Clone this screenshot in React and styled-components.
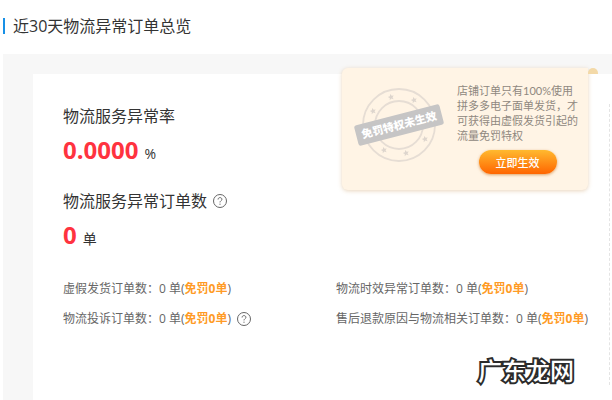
import React from "react";
import styled, { createGlobalStyle } from "styled-components";

//-----------------------------------------------------------------------------------------------

const colors = {
	blue: "#1890e6",
	red: "#ff333f",
	orange: "#ff9b26",
	text: "#333333",
	grey: "#666666",
	panel: "#f7f7f7",
	cream: "#fff4e5",
};

const GlobalStyle = createGlobalStyle`
	* {
		box-sizing: border-box;
	}

	body {
		margin: 0;
		background: #ffffff;
		color: ${colors.text};
		font-family: "Open Sans", "Noto Sans CJK SC", sans-serif;
	}
`;

const Page = styled.main`
	display: flex;
	flex-direction: column;
	min-height: 100vh;
	padding: 14px 0 0 3px;
`;

const Title = styled.h1`
	display: flex;
	align-items: center;
	gap: 8px;
	margin: 0 0 16px;
	font-size: 16px;
	font-weight: 400;
	line-height: 24px;

	&::before {
		content: "";
		width: 2px;
		height: 16px;
		background: ${colors.blue};
	}
`;

const Panel = styled.section`
	display: flex;
	flex: 1;
	padding: 20px 0 0 30px;
	background: ${colors.panel};
`;

const Card = styled.div`
	position: relative;
	display: flex;
	flex: 1;
	padding: 30px 2px 15px 30px;
	background: #ffffff;
`;

const Summary = styled.div`
	flex: 1;
	border-right: 1px dashed #e4e4e4;
`;

const Metric = styled.div`
	margin-bottom: 17px;
`;

const MetricLabel = styled.h2`
	display: flex;
	align-items: center;
	gap: 6px;
	margin: 0;
	font-size: 16px;
	font-weight: 400;
	line-height: 24px;
`;

const MetricValue = styled.p`
	display: flex;
	align-items: baseline;
	gap: 6px;
	margin: 0;
	font-size: 14px;
	line-height: 20px;

	strong {
		color: ${colors.red};
		font-size: 24px;
		font-weight: 700;
		line-height: 44px;
	}
`;

const Details = styled.ul`
	display: grid;
	grid-template-columns: 1fr 1fr;
	margin: 0;
	padding: 0;
	list-style: none;
`;

const Detail = styled.li`
	display: flex;
	align-items: center;
	gap: 6px;
	color: ${colors.grey};
	font-size: 12px;
	line-height: 30px;
	white-space: nowrap;

	b {
		color: ${colors.orange};
	}
`;

const HelpButton = styled.button`
	display: flex;
	padding: 0;
	border: 0;
	background: none;
	color: ${colors.grey};
	cursor: pointer;

	svg {
		width: 14px;
		height: 14px;
	}
`;

const Promo = styled.aside`
	position: absolute;
	top: -6px;
	right: 24px;
	display: flex;
	gap: 13px;
	width: 246px;
	padding: 15px 10px 16px 12px;
	border-radius: 6px 0 6px 6px;
	background: ${colors.cream};
	box-shadow: 0 1px 4px rgba(200, 150, 90, 0.4);

	/* folded corner behind the card edge */
	&::after {
		content: "";
		position: absolute;
		top: 0;
		left: 100%;
		width: 10px;
		height: 6px;
		border-radius: 5px 5px 0 0;
		background: #f3d9a8;
	}
`;

const PromoBody = styled.div`
	flex: 1;
	display: flex;
	flex-direction: column;
	align-items: center;
	gap: 7px;
`;

const PromoText = styled.p`
	align-self: stretch;
	margin: 0;
	color: #8f8880;
	font-family: Lato, "Noto Sans CJK SC", sans-serif;
	font-size: 11px;
	line-height: 15px;
	white-space: nowrap;

	span {
		display: block;
	}
`;

const ActivateButton = styled.button`
	width: 78px;
	height: 24px;
	padding: 0;
	border: 0;
	border-radius: 12px;
	background: linear-gradient(#ffb92f, #ff6500);
	box-shadow: 0 1px 3px rgba(200, 110, 20, 0.6);
	color: #ffffff;
	font-family: "Noto Sans CJK SC", sans-serif;
	font-size: 11px;
	font-weight: 500;
	line-height: 24px;
	cursor: pointer;
`;

const StampSvg = styled.svg`
	flex: none;
	width: 90px;
	height: 84px;

	text {
		fill: #ffffff;
		font-family: "Noto Sans CJK SC", sans-serif;
		font-size: 11px;
		font-weight: 900;
	}
`;

const Watermark = styled.span`
	position: absolute;
	right: 38px;
	bottom: 14px;
	color: #ffffff;
	font-family: "Noto Sans CJK SC", sans-serif;
	font-size: 24px;
	font-weight: 500;
	line-height: 32px;
	-webkit-text-stroke: 4px #2b2b2b;
	paint-order: stroke fill;
	stroke-linejoin: round;
`;

//-----------------------------------------------------------------------------------------------

const details = [
	{ name: "虚假发货订单数", count: 0, exempt: 0 },
	{ name: "物流时效异常订单数", count: 0, exempt: 0 },
	{ name: "物流投诉订单数", count: 0, exempt: 0, help: true },
	{ name: "售后退款原因与物流相关订单数", count: 0, exempt: 0 },
];

const stars = [
	[-8, -28],
	[15, -25],
	[-26, -14],
	[26, 14],
	[-15, 25],
	[7, 28],
];

function Help({ label }) {
	return (
		<HelpButton type="button" aria-label={label}>
			<svg viewBox="0 0 14 14" fill="none" stroke="currentColor">
				<circle cx="7" cy="7" r="6.5" />
				<path d="M5.1 5.5C5.1 4.3 5.9 3.6 7 3.6S8.9 4.3 8.9 5.4C8.9 6.7 7 6.8 7 8.4" />
				<circle cx="7" cy="10.2" r="0.6" fill="currentColor" stroke="none" />
			</svg>
		</HelpButton>
	);
}

function Stamp() {
	return (
		<StampSvg viewBox="-45 -42 90 84">
			<g fill="none" stroke="#e6ddd4">
				<circle r="36" strokeWidth="1.8" />
				<circle r="24" strokeWidth="1.8" />
			</g>
			{stars.map(([x, y]) => (
				<path
					key={`${x},${y}`}
					transform={`translate(${x} ${y}) rotate(-14)`}
					d="M0-3.2 .9-1 3.1-.9 1.4.6 2 2.8 0 1.6-2 2.8-1.4.6-3.1-.9-.9-1Z"
					fill="#ddd5cd"
				/>
			))}
			<g transform="rotate(-14.5)">
				<rect x="-44" y="-10.5" width="88" height="21" rx="2.5" fill="#c6c5c5" />
				<text y="4" textAnchor="middle">
					免罚特权未生效
				</text>
			</g>
		</StampSvg>
	);
}

export default function App() {
	return (
		<>
			<GlobalStyle />
			<Page>
				<Title>近30天物流异常订单总览</Title>
				<Panel>
					<Card>
						<Summary>
							<Metric>
								<MetricLabel>物流服务异常率</MetricLabel>
								<MetricValue>
									<strong>0.0000</strong>%
								</MetricValue>
							</Metric>
							<Metric>
								<MetricLabel>
									物流服务异常订单数
									<Help label="物流服务异常订单数" />
								</MetricLabel>
								<MetricValue>
									<strong>0</strong>单
								</MetricValue>
							</Metric>
							<Details>
								{details.map((el) => (
									<Detail key={el.name}>
										<span>
											{el.name}：{el.count} 单(<b>免罚{el.exempt}单</b>)
										</span>
										{el.help && <Help label={el.name} />}
									</Detail>
								))}
							</Details>
						</Summary>
						<Promo>
							<Stamp />
							<PromoBody>
								<PromoText>
									<span>店铺订单只有100%使用</span>
									<span>拼多多电子面单发货，才</span>
									<span>可获得由虚假发货引起的</span>
									<span>流量免罚特权</span>
								</PromoText>
								<ActivateButton type="button">立即生效</ActivateButton>
							</PromoBody>
						</Promo>
						<Watermark>广东龙网</Watermark>
					</Card>
				</Panel>
			</Page>
		</>
	);
}
